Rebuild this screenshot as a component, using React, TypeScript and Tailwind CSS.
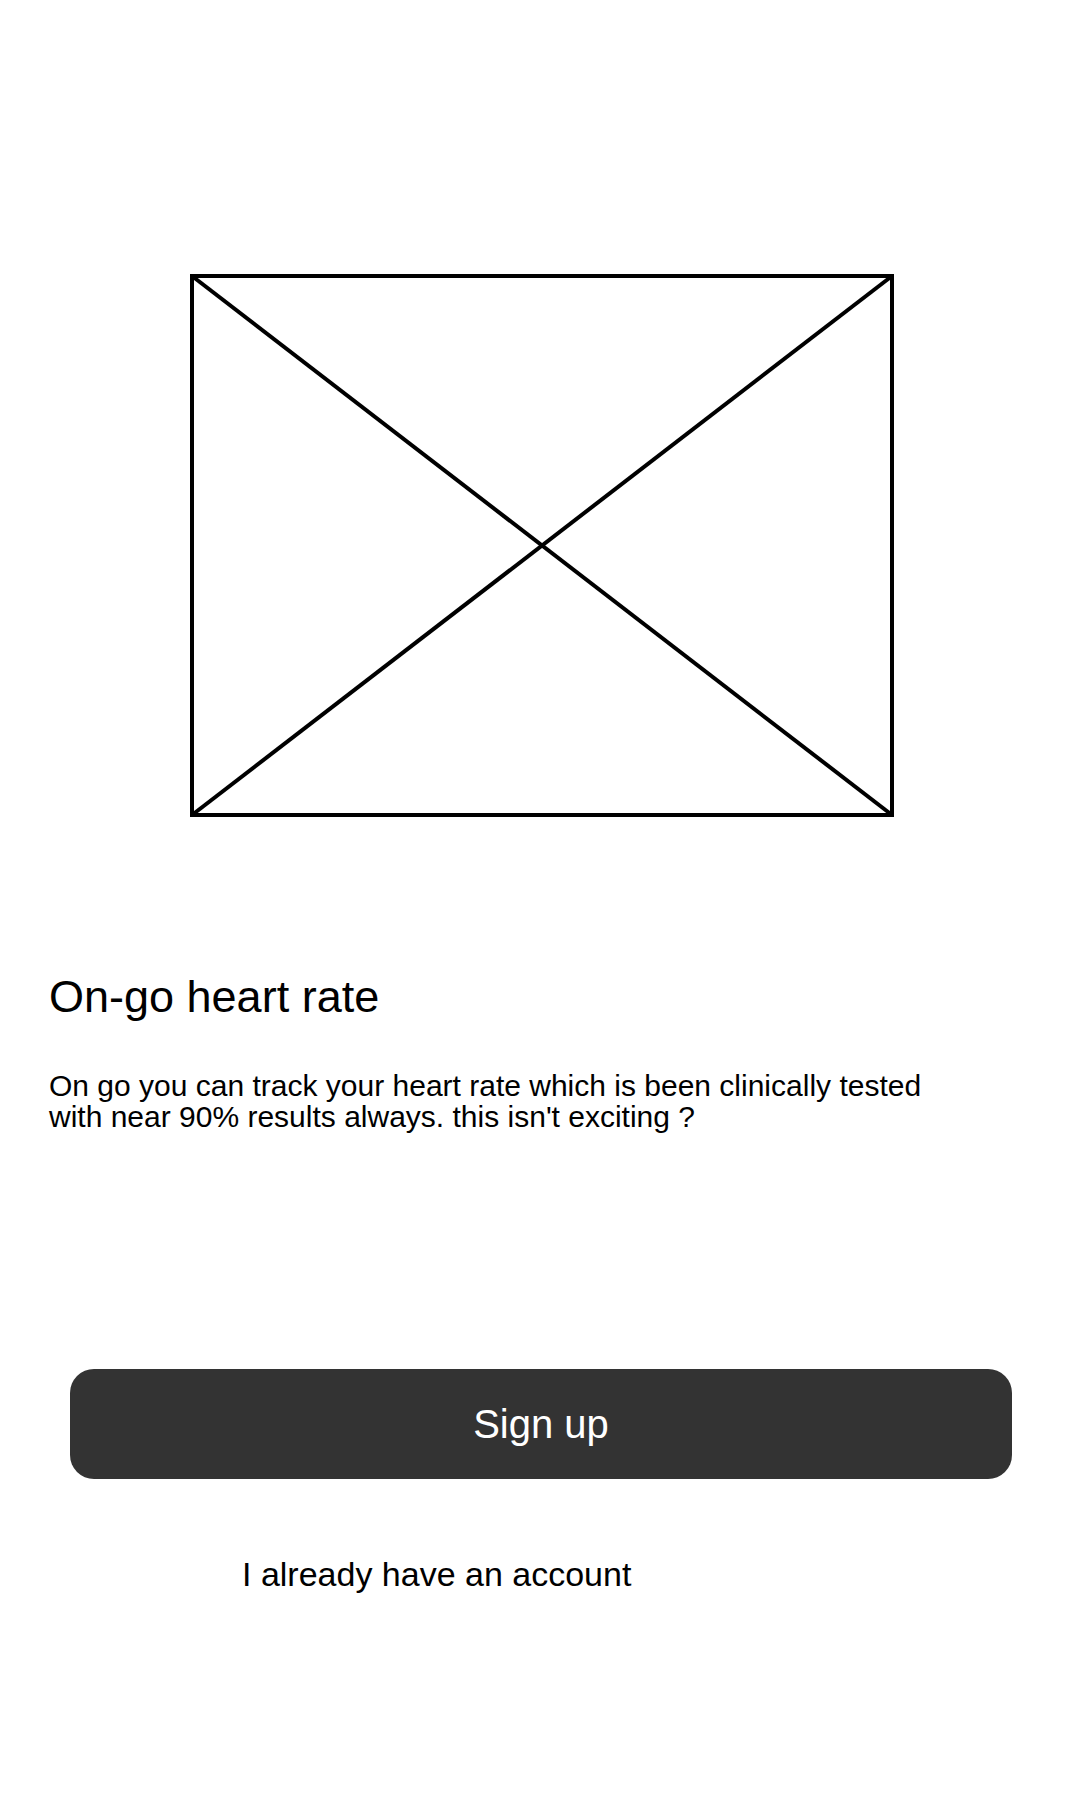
import React from "react";

const Placeholder: React.FC = () => (
  <svg width="704" height="543" viewBox="0 0 704 543" className="block">
    <rect x="2" y="2" width="700" height="539" fill="none" stroke="#000" strokeWidth="4" />
    <line x1="2" y1="2" x2="702" y2="541" stroke="#000" strokeWidth="4" />
    <line x1="702" y1="2" x2="2" y2="541" stroke="#000" strokeWidth="4" />
  </svg>
);

export default function App() {
  return (
    <div
      className="min-h-[1800px] w-[1080px] bg-white text-black"
      style={{ fontFamily: '"Liberation Sans", Arial, sans-serif' }}
    >
      <div className="pl-[190px] pt-[274px]">
        <Placeholder />
      </div>

      <h1 className="mt-[157px] pl-[49px] text-[45px] leading-none font-normal">
        On-go heart rate
      </h1>

      <p className="mt-[51px] w-[950px] pl-[49px] text-[30px] leading-[31px]">
        On go you can track your heart rate which is been clinically tested with near 90% results always. this isn't
        exciting ?
      </p>

      <div className="mt-[237px] px-[70px] pr-[68px]">
        <button className="flex h-[110px] w-full items-center justify-center rounded-[24px] bg-[#333333] text-[40px] text-white">
          Sign up
        </button>
      </div>

      <div className="mt-[78px] pl-[242px] text-[34px] leading-none">I already have an account</div>
    </div>
  );
}
